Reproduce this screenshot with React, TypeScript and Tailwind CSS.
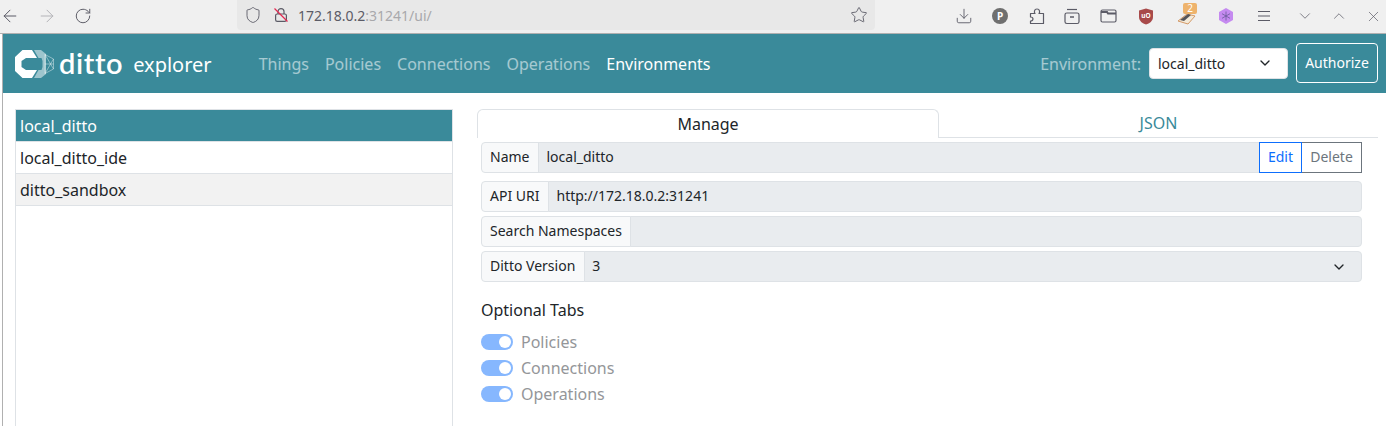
import type { ReactNode } from "react";
import { ChevronDown, ChevronUp, X, ArrowLeft, ArrowRight, RotateCw, Star, Shield, Download } from "lucide-react";

const font = { fontFamily: '"Noto Sans", sans-serif' };
const c = "#5b5b66";

function Lock() {
  return (
    <svg width="16" height="16" viewBox="0 0 16 16" fill="none" stroke={c} strokeWidth="1.2">
      <rect x="2.600" y="7" width="10.800" height="7.400" rx="1.600" />
      <path d="M5 7V4.600a3 3 0 0 1 6 0V7" />
      <path d="M1.500 1.500 14.500 14.500" stroke="#e22850" strokeWidth="1.300" />
    </svg>
  );
}

function Logo() {
  return (
    <svg width="40" height="28" viewBox="0 0 40 28" fill="none">
      <path d="M7.500 0H17l5 8H11L6.500 11v6l4.500 3H22l-5 8H7.500L0 21V7z" fill="#fff" />
      <path d="M19 0H26l5 4v20l-5 4h-7l4.500-8h3l1-3v-6l-1-3h-3z" fill="#fff" opacity="0.5" />
      <path d="M30 4.500 38.500 9v10L30 23.500M30 4.500v19M30 4.500 38.500 19M38.500 9 30 23.500M30 14h8.500" stroke="#fff" strokeWidth="0.700" opacity="0.6" />
    </svg>
  );
}

function Slot({ children, ml = "" }: { children: ReactNode; ml?: string }) {
  return <div className={`w-[36px] h-[20px] shrink-0 flex items-center justify-center ${ml}`}>{children}</div>;
}

function Toolbar() {
  return (
    <div className="h-[34px] bg-[#f0f0f0] border-b border-[#b0b0b0] flex items-center overflow-hidden text-[#5b5b66]">
      <div className="w-[237px] shrink-0 flex items-center gap-[17px] -mt-[1px]">
        <ArrowLeft size={20} strokeWidth={1.200} color={c} />
        <ArrowRight size={20} strokeWidth={1.200} color="#b4b4b8" />
        <RotateCw size={18} strokeWidth={1.300} color={c} />
      </div>
      <div className="w-[638px] shrink-0 h-[30px] -mt-[3px] bg-[#e8e8e8] rounded-b flex items-center pl-[7px] pr-[7px]">
        <Shield size={18} strokeWidth={1.200} color={c} />
        <span className="ml-[11px] flex"><Lock /></span>
        <span className="ml-[9px] text-[14px] text-[#5b5b66]" style={font}>172.18.0.2<span className="text-[#a8a8ac]">:31241/ui/</span></span>
        <Star size={18} strokeWidth={1.200} color={c} className="ml-auto" />
      </div>
      <div className="flex items-center pl-[71px] -mt-[1px]">
        <Slot><Download size={18} strokeWidth={1.200} color={c} /></Slot>
        <Slot>
          <span className="w-[16px] h-[16px] rounded-full bg-[#6f6f6f] text-white text-[10px] font-bold flex items-center justify-center" style={font}>P</span>
        </Slot>
        <Slot ml="ml-[1px]">
          <svg width="16" height="17" viewBox="0 0 16 17" fill="none" stroke={c} strokeWidth="1.200">
            <path d="M1.500 15.500V13c1.500 0 2.500-.7 2.500-2S3 9 1.500 9V5.500H6C5 4.500 5 1 8 1s3 3.500 2 4.500h4.500v10z" strokeLinejoin="round" />
          </svg>
        </Slot>
        <Slot ml="-ml-[1px]">
          <svg width="16" height="17" viewBox="0 0 16 17" fill="none" stroke={c} strokeWidth="1.200">
            <path d="M3 1.500h10" />
            <rect x="1" y="5" width="14" height="10.500" rx="1.800" />
            <path d="M6 9h4" strokeWidth="1.500" />
          </svg>
        </Slot>
        <Slot>
          <svg width="17" height="14" viewBox="0 0 17 14" fill="none" stroke={c} strokeWidth="1.200">
            <rect x="1" y="1" width="15" height="12" rx="1.500" />
            <path d="M1 3h6l1 1.500h8" strokeWidth="2" />
          </svg>
        </Slot>
        <Slot ml="ml-[2px]">
          <svg width="16" height="17" viewBox="0 0 16 17">
            <path d="M8 .5 15 2.500V9c0 4-3.500 6.500-7 7.500C4.500 15.500 1 13 1 9V2.500z" fill="#a84a4a" />
            <text x="8" y="9.500" textAnchor="middle" fontSize="6.500" fontWeight="700" fill="#fff" fontFamily="Noto Sans">uO</text>
          </svg>
        </Slot>
        <Slot ml="ml-[5px]">
          <span className="relative w-[20px] h-[16px]">
            <svg width="20" height="14" viewBox="0 0 20 14" className="absolute left-0 top-[3px]">
              <path d="M1 10 10 3l8 2-7 8z" fill="#f4ead8" stroke="#d49a68" strokeWidth="1" />
              <path d="M3 9l8-6 3 1-7 6z" fill="#55555a" />
            </svg>
            <span className="absolute left-[6px] -top-[5px] w-[14px] h-[11px] bg-[#eeb36c] rounded-[2px] text-white text-[10px] leading-[11px] text-center" style={font}>2</span>
          </span>
        </Slot>
        <Slot ml="ml-[3px]">
          <svg width="16" height="18" viewBox="0 0 16 18">
            <path d="M8 1 15 5v8l-7 4-7-4V5z" fill="#c58af0" />
            <path d="M8 4.500v9M4 6.700l8 4.600M12 6.700l-8 4.600" stroke="#6a5a9a" strokeWidth="0.800" />
          </svg>
        </Slot>
        <Slot ml="ml-[2px]">
          <svg width="14" height="12" viewBox="0 0 14 12" stroke={c} strokeWidth="1.200"><path d="M1 1.500h12M1 6h12M1 10.500h12" /></svg>
        </Slot>
        <Slot ml="ml-[5px]"><ChevronDown size={18} strokeWidth={1} color={c} /></Slot>
        <Slot ml="-ml-[2px]"><ChevronUp size={18} strokeWidth={1} color={c} /></Slot>
        <Slot ml="-ml-[2px]"><X size={17} strokeWidth={1} color={c} /></Slot>
      </div>
    </div>
  );
}

function Navbar() {
  return (
    <div className="h-[59px] bg-[#3a8a9a] flex items-center pl-[12px] pr-[8px]">
      <Logo />
      <span className="ml-[4px] text-[29px] font-semibold tracking-[0.6px] text-white leading-none -mt-[2px]" style={{ fontFamily: "Lato, sans-serif" }}>ditto</span>
      <span className="ml-[10px] text-[20px] text-white mt-[3px]">explorer</span>
      <div className="ml-[47px] flex gap-[16px] text-[16px] text-white/55">
        <span>Things</span>
        <span>Policies</span>
        <span>Connections</span>
        <span>Operations</span>
        <span className="text-white">Environments</span>
      </div>
      <span className="ml-auto text-[16px] text-white/55">Environment:</span>
      <div className="ml-[8px] w-[139px] h-[31px] -mt-[1px] bg-white border border-[#dee2e6] rounded flex items-center pl-[8px] pr-[14px] text-[14px] text-[#212529]">
        <span>local_ditto</span>
        <ChevronDown size={16} strokeWidth={2} className="ml-auto" />
      </div>
      <div className="ml-[8px] w-[82px] h-[40px] -mt-[1px] border border-white rounded flex items-center justify-center text-[14px] text-white">
        <span className="-mt-[1px]">Authorize</span>
      </div>
    </div>
  );
}

function Group({ label, children, mt, wide }: { label: string; children?: ReactNode; mt: string; wide?: boolean }) {
  return (
    <div className={`${mt} h-[31px] flex text-[14px] text-[#212529]`}>
      <div className={`h-full pl-[8px] pb-[2px] flex items-center bg-[#f8f9fa] border border-[#dee2e6] rounded-l ${wide ? "pr-[9px]" : "pr-[8px]"}`}>{label}</div>
      <div className="flex-1 -ml-px h-full flex items-center pl-[8px] pr-[14px] bg-[#e9ecef] border border-[#dee2e6] rounded-r">
        {children}
      </div>
    </div>
  );
}

function Switch({ label }: { label: string }) {
  return (
    <div className="h-[26px] flex items-center">
      <span className="w-[32px] h-[16px] rounded-full bg-[#86b7fe] flex items-center justify-end pr-[2px]">
        <span className="w-[12px] h-[12px] rounded-full bg-white" />
      </span>
      <span className="ml-[8px] text-[16px] text-[#949699]">{label}</span>
    </div>
  );
}

export default function App() {
  const row = "h-[32px] px-[4px] flex items-center text-[16px] border-b border-[#dee2e6]";
  return (
    <div className="w-[1386px] h-[426px] overflow-hidden bg-white text-[#212529]" style={font}>
      <Toolbar />
      <div className="ml-[2px] border-l border-[#b0b0b0] h-[392px]">
        <Navbar />
        <div className="flex pt-[16px] pl-[12px] pr-[8px]">
          <div className="w-[438px] h-[330px] border border-[#dee2e6]">
            <div className={`${row} bg-[#3a8a9a] text-white`}>local_ditto</div>
            <div className={row}>local_ditto_ide</div>
            <div className={`${row} bg-[#f2f2f2]`}>ditto_sandbox</div>
          </div>
          <div className="ml-[24px] flex-1">
            <div className="h-[29px] flex border-b border-[#dee2e6] text-[16px]">
              <div className="w-[462px] h-[29px] bg-white border border-b-0 border-[#dee2e6] rounded-t-md flex items-center justify-center">Manage</div>
              <div className="flex-1 flex items-center justify-center text-[#3a8a9a]">JSON</div>
            </div>
            <div className="ml-[4px] mr-[16px]">
              <div className="mt-[4px] h-[31px] flex text-[14px]">
                <div className="pl-[8px] pr-[9px] pb-[2px] flex items-center bg-[#f8f9fa] border border-[#dee2e6] rounded-l">Name</div>
                <div className="flex-1 -ml-px flex items-center pl-[7px] pb-[2px] bg-[#e9ecef] border border-[#dee2e6]">local_ditto</div>
                <div className="w-[43px] -ml-px pb-[2px] flex items-center justify-center bg-white border border-[#0d6efd] text-[#0d6efd] relative z-10">Edit</div>
                <div className="w-[61px] -ml-px pb-[2px] flex items-center justify-center bg-white border border-[#6c757d] text-[#6c757d]">Delete</div>
              </div>
              <Group label="API URI" mt="mt-[8px]"><span className="-mt-[2px]">http://172.18.0.2:31241</span></Group>
              <Group label="Search Namespaces" mt="mt-[4px]" />
              <Group label="Ditto Version" mt="mt-[4px]" wide>
                <span className="-mt-[2px] -ml-[1px]">3</span>
                <ChevronDown size={16} strokeWidth={2} className="ml-auto" />
              </Group>
              <div className="mt-[16px] h-[24px] leading-[24px] text-[16px]">Optional Tabs</div>
              <div className="mt-[7px]">
                <Switch label="Policies" />
                <Switch label="Connections" />
                <Switch label="Operations" />
              </div>
            </div>
          </div>
        </div>
      </div>
    </div>
  );
}
